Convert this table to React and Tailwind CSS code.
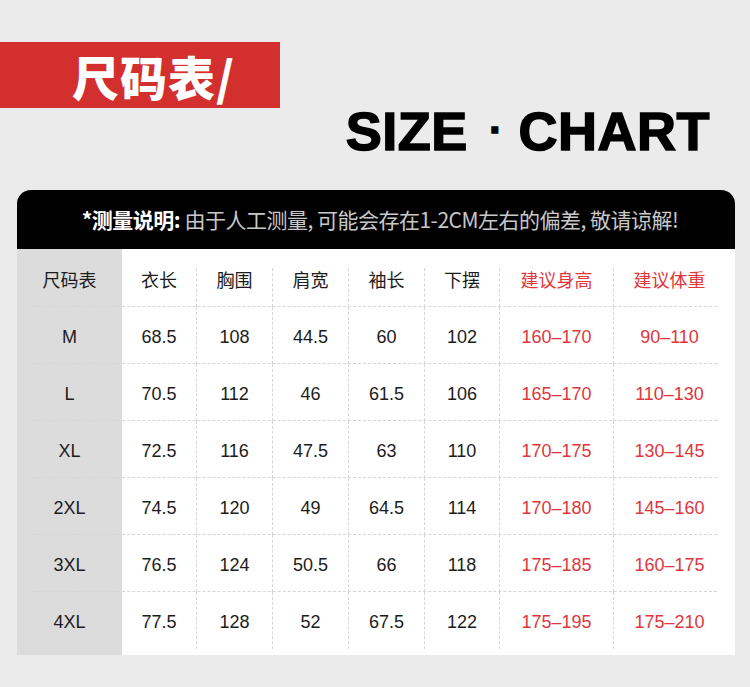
import React from 'react';

const cols = ['衣长', '胸围', '肩宽', '袖长', '下摆'];
const rows = [
    ['M', '68.5', '108', '44.5', '60', '102', '160–170', '90–110'],
    ['L', '70.5', '112', '46', '61.5', '106', '165–170', '110–130'],
    ['XL', '72.5', '116', '47.5', '63', '110', '170–175', '130–145'],
    ['2XL', '74.5', '120', '49', '64.5', '114', '170–180', '145–160'],
    ['3XL', '76.5', '124', '50.5', '66', '118', '175–185', '160–175'],
    ['4XL', '77.5', '128', '52', '67.5', '122', '175–195', '175–210'],
];

const grid = 'grid grid-cols-[105px_75px_76px_76px_76px_75px_114px_1fr]';
const font = { fontFamily: '"Liberation Sans", "Noto Sans CJK SC", sans-serif' };

const App = () => {
    return (
        <div className="w-[750px] h-[687px] bg-[#ebebeb] overflow-hidden" style={font}>
            <div className="flex justify-between items-start h-[190px]">
                <div className="mt-[42px] w-[280px] h-[66px] bg-[#d32f2f] flex items-center pl-[72px]">
                    <span
                        className="text-white text-[47px] font-black leading-none tracking-[1px]"
                        style={{ fontFamily: '"Noto Sans CJK SC", sans-serif' }}
                    >
                        尺码表/
                    </span>
                </div>
                <div className="mt-[104px] mr-[40px] text-[54px] leading-none font-black text-black tracking-[0.5px] [-webkit-text-stroke:1.5px_black]">
                    SIZE <span className="text-[40px] align-[6px] ml-[6px]">·</span> CHART
                </div>
            </div>

            <div className="ml-[17px] mr-[15px]">
                <div className="h-[59px] bg-black rounded-t-[14px] flex items-center justify-center pl-[8px]">
                    <p
                        className="text-[21px] leading-none tracking-[-0.5px]"
                        style={{ fontFamily: '"Noto Sans CJK SC", sans-serif' }}
                    >
                        <span className="text-white font-bold">*测量说明: </span>
                        <span className="text-[#c8c8c8]">由于人工测量, 可能会存在1-2CM左右的偏差, 敬请谅解!</span>
                    </p>
                </div>

                <div className="bg-white text-[#1c1c1c]">
                    {/* header row */}
                    <div className={`${grid} h-[58px] relative after:absolute after:left-[15px] after:right-[18px] after:bottom-0 after:border-b after:border-dashed after:border-[#d6d6d6]`}>
                        <div className="bg-[#dcdcdc] flex justify-center pt-[19px]">
                            <span className="text-[18px] leading-[26px]">尺码表</span>
                        </div>
                        {cols.map((c) => (
                            <div key={c} className="pt-[19px]">
                                <div className="h-[39px] border-r border-dashed border-[#d6d6d6] flex justify-center">
                                    <span className="text-[18px] leading-[26px]">{c}</span>
                                </div>
                            </div>
                        ))}
                        <div className="pt-[19px]">
                            <div className="h-[39px] border-r border-dashed border-[#d6d6d6] flex justify-center">
                                <span className="text-[18px] leading-[26px] text-[#e0363c]">建议身高</span>
                            </div>
                        </div>
                        <div className="pt-[19px] flex justify-center pr-[10px]">
                            <span className="text-[18px] leading-[26px] text-[#e0363c]">建议体重</span>
                        </div>
                    </div>

                    {rows.map((r, i) => (
                        <div
                            key={r[0]}
                            className={`${grid} h-[57px] relative ${i < rows.length - 1 ? 'after:absolute after:left-[15px] after:right-[18px] after:bottom-0 after:border-b after:border-dashed after:border-[#d6d6d6]' : ''}`}
                        >
                            {r.map((v, j) => (
                                <div
                                    key={j}
                                    className={`flex items-center justify-center pt-[3px] text-[18px] ${
                                        j === 0 ? 'bg-[#dcdcdc]' : ''
                                    } ${j >= 1 && j <= 6 ? 'border-r border-dashed border-[#d6d6d6]' : ''} ${
                                        j >= 6 ? 'text-[#e0363c]' : ''
                                    } ${j === 7 ? 'pr-[10px]' : ''}`}
                                >
                                    {v}
                                </div>
                            ))}
                        </div>
                    ))}

                    <div className={`${grid} h-[6px]`}>
                        <div className="bg-[#dcdcdc]" />
                    </div>
                </div>
            </div>
        </div>
    );
};

export default App;
